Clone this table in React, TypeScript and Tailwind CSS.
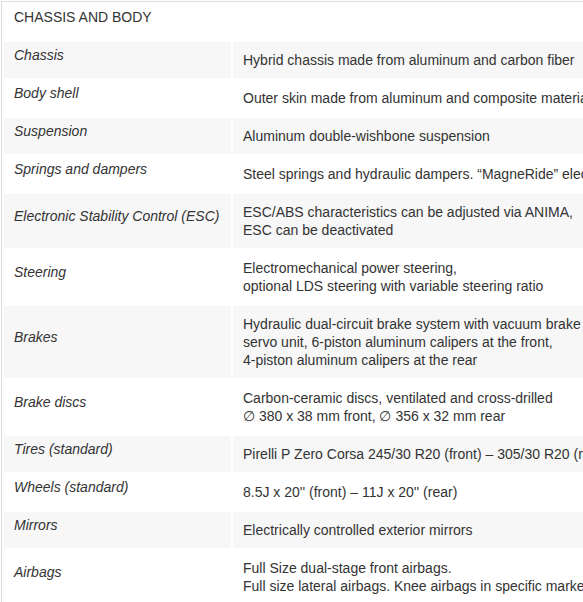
const rows: { label: string; lines: string[] }[] = [
  { label: "Chassis", lines: ["Hybrid chassis made from aluminum and carbon fiber"] },
  { label: "Body shell", lines: ["Outer skin made from aluminum and composite materials"] },
  { label: "Suspension", lines: ["Aluminum double-wishbone suspension"] },
  {
    label: "Springs and dampers",
    lines: ["Steel springs and hydraulic dampers. \u201CMagneRide\u201D electromagnetic damper control system"],
  },
  {
    label: "Electronic Stability Control (ESC)",
    lines: ["ESC/ABS characteristics can be adjusted via ANIMA,", "ESC can be deactivated"],
  },
  {
    label: "Steering",
    lines: ["Electromechanical power steering,", "optional LDS steering with variable steering ratio"],
  },
  {
    label: "Brakes",
    lines: [
      "Hydraulic dual-circuit brake system with vacuum brake",
      "servo unit, 6-piston aluminum calipers at the front,",
      "4-piston aluminum calipers at the rear",
    ],
  },
  {
    label: "Brake discs",
    lines: ["Carbon-ceramic discs, ventilated and cross-drilled", "\u2205 380 x 38 mm front, \u2205 356 x 32 mm rear"],
  },
  { label: "Tires (standard)", lines: ["Pirelli P Zero Corsa 245/30 R20 (front) \u2013 305/30 R20 (rear)"] },
  { label: "Wheels (standard)", lines: ["8.5J x 20'' (front) \u2013 11J x 20'' (rear)"] },
  { label: "Mirrors", lines: ["Electrically controlled exterior mirrors"] },
  {
    label: "Airbags",
    lines: ["Full Size dual-stage front airbags.", "Full size lateral airbags. Knee airbags in specific markets"],
  },
];

export default function App() {
  return (
    <div
      className="w-full overflow-hidden bg-white pt-px pl-px text-[14px] leading-[18px] text-[#333]"
      style={{ fontFamily: '"Liberation Sans", Arial, sans-serif' }}
    >
      <table className="w-[820px] table-fixed border-separate border-spacing-[2px] border-t border-l border-[#dcdcdc]">
        <colgroup>
          <col className="w-[227px]" />
          <col />
        </colgroup>
        <tbody>
          <tr>
            <td colSpan={2} className="h-[36px] pl-[10px] pt-[4px] pb-[14px] align-middle">
              CHASSIS AND BODY
            </td>
          </tr>
          {rows.map((r, i) => {
            const bg = i % 2 === 0 ? "bg-[#f7f7f7]" : "bg-white";
            return (
              <tr key={r.label}>
                <td className={`${bg} pl-[10px] pr-2 pt-[4px] pb-[14px] align-middle italic whitespace-nowrap`}>
                  {r.label}
                </td>
                <td className={`${bg} pl-[10px] py-[9px] align-middle whitespace-nowrap`}>
                  {r.lines.map((l) => (
                    <div key={l}>{l}</div>
                  ))}
                </td>
              </tr>
            );
          })}
        </tbody>
      </table>
    </div>
  );
}
